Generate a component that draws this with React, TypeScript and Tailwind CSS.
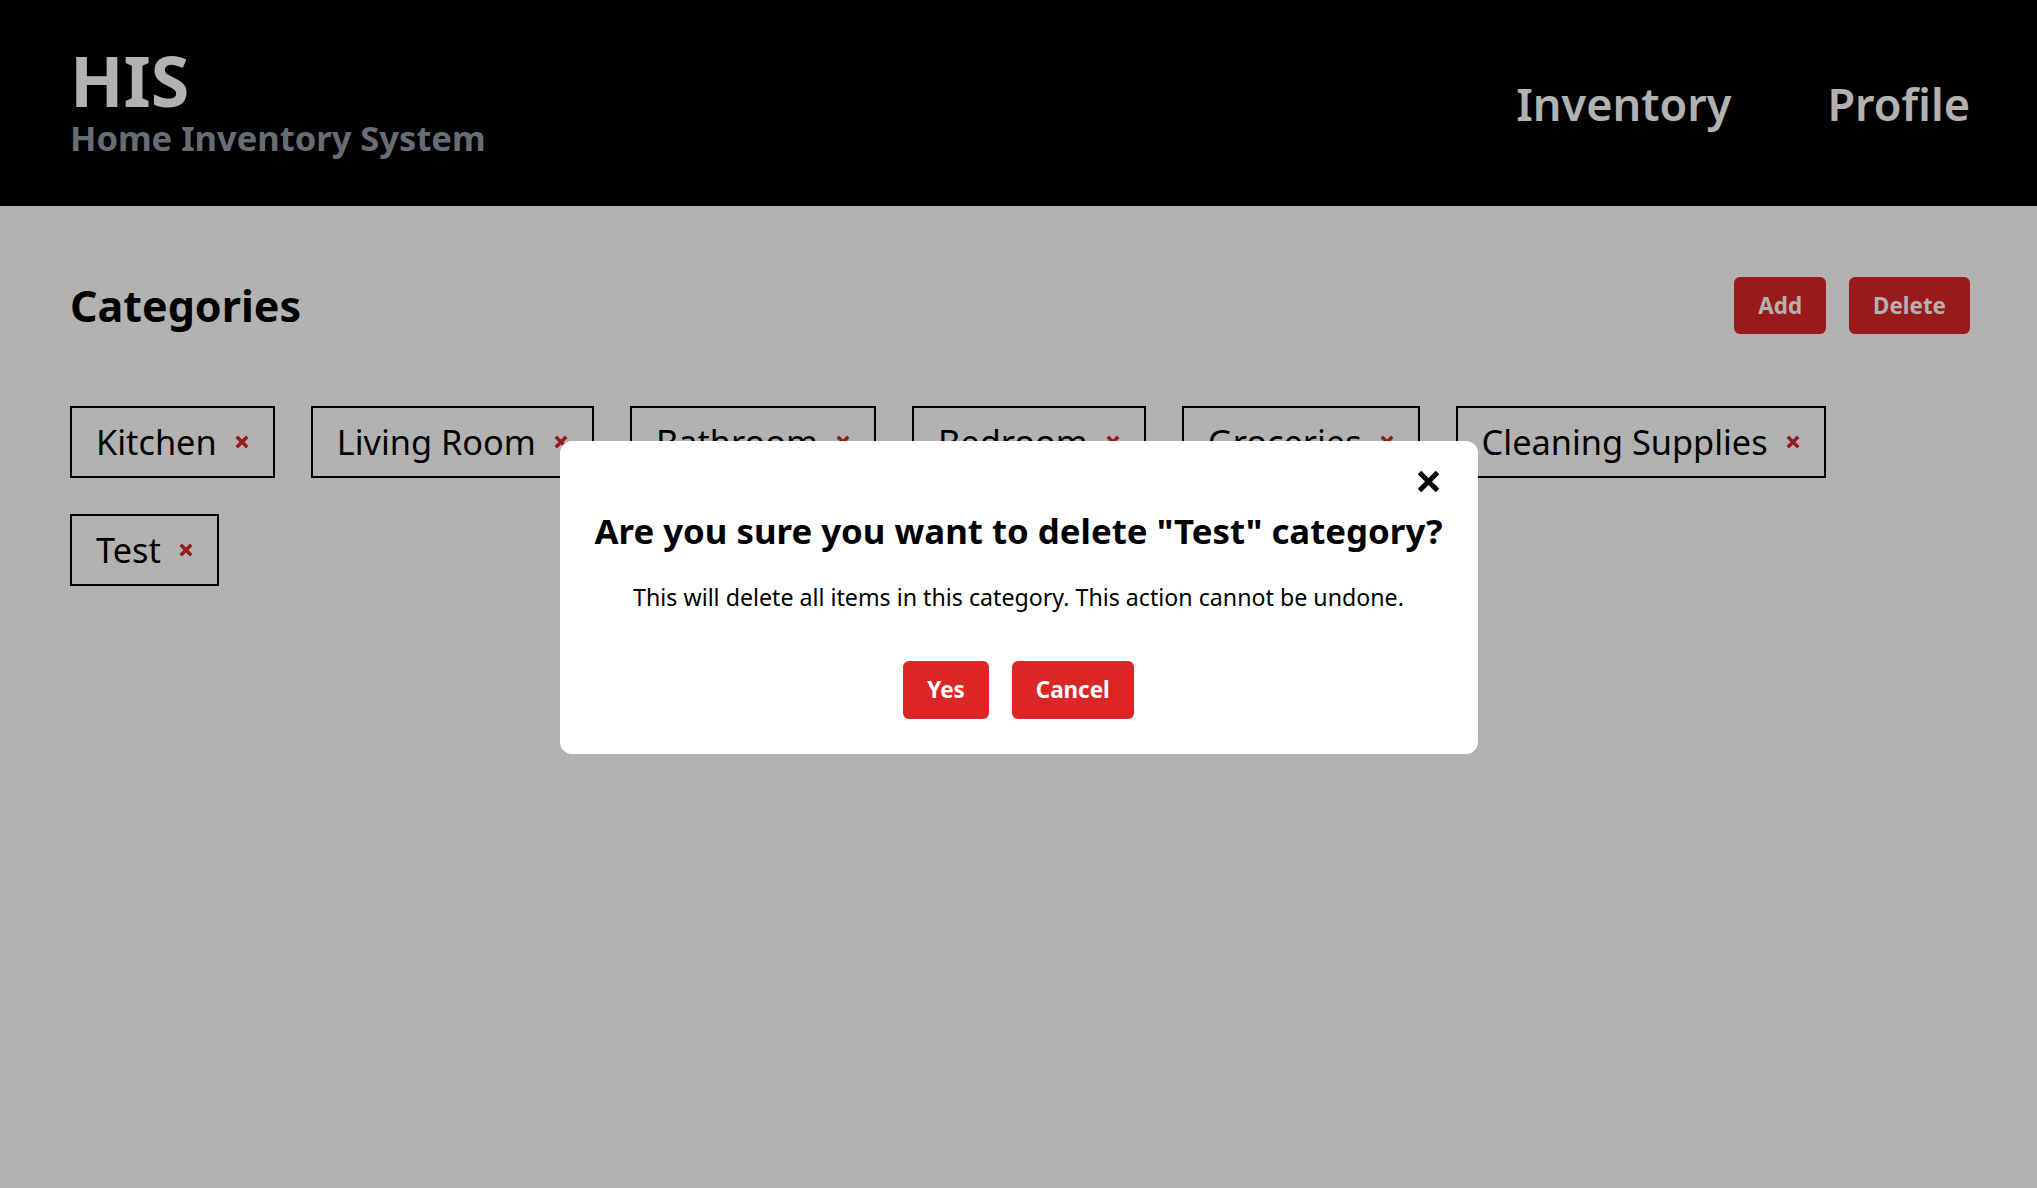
const categories = [
  "Kitchen",
  "Living Room",
  "Bathroom",
  "Bedroom",
  "Groceries",
  "Cleaning Supplies",
  "Test",
];

function CrossIcon({ size, stroke, className }: { size: number; stroke: number; className?: string }) {
  const p = stroke / 2;
  return (
    <svg width={size} height={size} viewBox={`0 0 ${size} ${size}`} className={className} fill="none">
      <path
        d={`M${p} ${p} L${size - p} ${size - p} M${size - p} ${p} L${p} ${size - p}`}
        stroke="currentColor"
        strokeWidth={stroke}
      />
    </svg>
  );
}

function Header() {
  return (
    <header className="h-[206px] bg-black pl-[70px] pr-[67px] flex items-center justify-between">
      <div className="flex flex-col">
        <h1 className="text-[70px] font-bold leading-none text-white">HIS</h1>
        <p className="text-[34.5px] font-bold leading-[46px] text-[#959ca8]">Home Inventory System</p>
      </div>
      <nav className="flex items-center gap-24">
        <a className="text-[45px] font-semibold leading-none text-white">Inventory</a>
        <a className="text-[45px] font-semibold leading-none text-white">Profile</a>
      </nav>
    </header>
  );
}

function Chip({ name }: { name: string }) {
  return (
    <div className="h-[72px] border-2 border-black px-6 flex items-center gap-[18px]">
      <span className="text-[34.3px] leading-none text-black">{name}</span>
      <CrossIcon size={14} stroke={3.5} className="text-[#dc2626]" />
    </div>
  );
}

function DeleteModal() {
  return (
    <div className="fixed inset-0 bg-black/30 flex items-center justify-center pt-[6px]">
      <div className="w-[918px] bg-white rounded-xl px-[30px] pt-[29px] pb-[35px] flex flex-col items-center">
        <div className="w-full flex justify-end pr-[8px]">
          <CrossIcon size={23} stroke={5} className="text-black" />
        </div>
        <h2 className="mt-[15px] whitespace-nowrap text-[34.8px] font-bold leading-[46px] text-black text-center">
          Are you sure you want to delete "Test" category?
        </h2>
        <p className="mt-[28px] whitespace-nowrap text-[23.2px] leading-[30px] text-black text-center">
          This will delete all items in this category. This action cannot be undone.
        </p>
        <div className="mt-[49px] flex items-center gap-[23px]">
          <button className="h-[58px] px-6 rounded-md bg-[#dc2626] text-white text-[22.4px] font-bold">Yes</button>
          <button className="h-[58px] px-6 rounded-md bg-[#dc2626] text-white text-[22.4px] font-bold">Cancel</button>
        </div>
      </div>
    </div>
  );
}

export default function App() {
  return (
    <div className="min-h-screen bg-white" style={{ fontFamily: '"Noto Sans", sans-serif' }}>
      <Header />

      <main className="pl-[70px] pr-[67px] pt-[71px]">
        <div className="h-[57px] flex items-center justify-between">
          <h2 className="text-[43px] font-bold leading-none text-black">Categories</h2>
          <div className="flex items-center gap-[23px]">
            <button className="h-[57px] px-6 rounded-md bg-[#dc2626] text-white text-[22.4px] font-bold">Add</button>
            <button className="h-[57px] px-6 rounded-md bg-[#dc2626] text-white text-[22.4px] font-bold">Delete</button>
          </div>
        </div>

        <div className="mt-[72px] flex flex-wrap gap-9">
          {categories.map((c) => (
            <Chip key={c} name={c} />
          ))}
        </div>
      </main>

      <DeleteModal />
    </div>
  );
}
